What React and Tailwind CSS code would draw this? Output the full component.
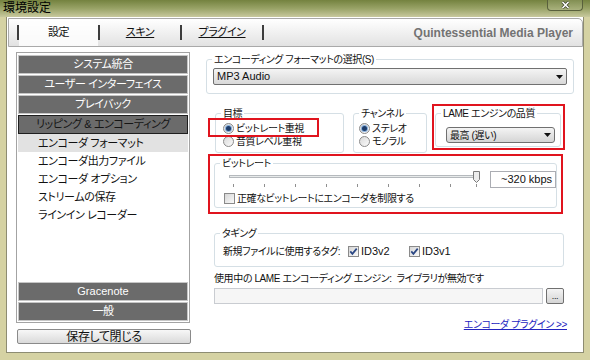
import React from "react";

const navBtn =
  "h-[19px] shrink-0 flex items-center justify-center bg-[#6b6b6b] border border-[#c6c6c6] text-white";

function Radio({ checked }) {
  return (
    <span className="w-[11px] h-[11px] shrink-0 rounded-full border border-[#8a8a8a] bg-gradient-to-br from-[#d9d9d9] to-[#fbfbfb] flex items-center justify-center">
      {checked && (
        <span className="w-[5px] h-[5px] rounded-full bg-[#1d3c6a] ring-1 ring-[#86aedb]" />
      )}
    </span>
  );
}

function Check({ checked }) {
  return (
    <span className="w-[11px] h-[11px] shrink-0 border border-[#8a8a8a] bg-gradient-to-br from-[#d6d6d6] to-[#fafafa] flex items-center justify-center">
      {checked && (
        <svg width="9" height="9" viewBox="0 0 9 9">
          <path d="M1.3 4.4 L3.4 6.9 L7.7 1.6" fill="none" stroke="#2b4784" strokeWidth="1.7" />
        </svg>
      )}
    </span>
  );
}

// group box; padding goes on the inner div so the legend stays put
function Group({ label, className, inner = "", children }) {
  return (
    <fieldset className={`border border-[#d5dfe5] rounded-[3px] shrink-0 ${className}`}>
      <legend className="ml-[5px] px-[2px] leading-[13px]">{label}</legend>
      <div className={inner}>{children}</div>
    </fieldset>
  );
}

function Arrow() {
  return (
    <svg width="7" height="4" viewBox="0 0 7 4">
      <path d="M0 0 H7 L3.5 4 Z" fill="#111" />
    </svg>
  );
}

function Slider() {
  const ticks = [4, 35, 66, 97, 128, 159, 190, 221, 247];
  return (
    <svg width="252" height="18" viewBox="0 0 252 18" className="shrink-0">
      <rect x="0.5" y="4.5" width="250" height="2" fill="#e7eaea" stroke="#b5b9bd" />
      {ticks.map((t) => (
        <line key={t} x1={t + 0.5} y1="13" x2={t + 0.5} y2="16" stroke="#8f8f8f" />
      ))}
      <path
        d="M244.5 0.5 H250.5 V8.5 L247.5 11.5 L244.5 8.5 Z"
        fill="#ececec"
        stroke="#7a7a7a"
      />
    </svg>
  );
}

export default function App() {
  return (
    <div className="w-[590px] h-[360px] overflow-hidden flex flex-col whitespace-nowrap bg-[#d5d2a3] font-['Liberation_Sans','Noto_Sans_CJK_JP',sans-serif] text-[10px] tracking-[-0.4px] text-[#111] [font-feature-settings:'palt']">
      {/* title bar */}
      <div className="h-[17px] shrink-0 flex justify-between bg-gradient-to-b from-[#74823f] via-[#99a367] to-[#c8c99e]">
        <span className="pl-[3px] text-[12px] leading-[17px] tracking-normal text-black">環境設定</span>
        <div className="mr-[7px] w-[36px] h-[11px] flex items-center justify-center border border-t-0 border-[#59603c] rounded-b-[4px] bg-white/10">
          <svg width="9" height="8" viewBox="0 0 9 8">
            <path d="M1.5 1 L7.5 7 M7.5 1 L1.5 7" stroke="#3c4128" strokeWidth="3" />
            <path d="M1.5 1 L7.5 7 M7.5 1 L1.5 7" stroke="#ffffff" strokeWidth="1.6" />
          </svg>
        </div>
      </div>

      <div className="flex-1 flex px-[6px] pb-[7px]">
        <div className="flex-1 flex flex-col bg-white border-x border-b border-[#8d8c72]">
          {/* tab bar */}
          <div className="mt-[1px] ml-[1px] h-[29px] shrink-0 flex items-center border border-[#a9a9a9] rounded-tr-[5px] bg-gradient-to-b from-white to-[#e2e2e2] pl-[8px] text-[11px]">
            <span className="w-[2px] h-[15px] bg-[#3d3d3d]" />
            <span className="w-[79px] h-full flex items-center justify-center bg-white/80">設定</span>
            <span className="w-[2px] h-[15px] bg-[#3d3d3d]" />
            <span className="w-[80px] flex items-center justify-center underline">スキン</span>
            <span className="w-[2px] h-[15px] bg-[#3d3d3d]" />
            <span className="w-[80px] flex items-center justify-center underline">プラグイン</span>
            <span className="w-[2px] h-[15px] bg-[#3d3d3d]" />
            <span className="ml-auto pr-[9px] font-bold text-[12px] tracking-normal text-[#737373]">
              Quintessential Media Player
            </span>
          </div>

          {/* body */}
          <div className="flex-1 flex">
            {/* left column */}
            <div className="pl-[9px] pt-[5px] flex flex-col text-[11px]">
              <div className="w-[174px] h-[271px] border border-[#a3a3a3] px-[1px] pt-[2px] pb-[1px] flex flex-col gap-[1px]">
                <div className={navBtn}>システム統合</div>
                <div className={navBtn}>ユーザー インターフェイス</div>
                <div className={navBtn}>プレイバック</div>
                <div className="h-[19px] shrink-0 flex items-center justify-center bg-[#6b6b6b] border border-[#1e1e1e] text-[#151515]">
                  リッピング &amp; エンコーディング
                </div>
                <div className="-mt-[1px] flex flex-col">
                  <div className="h-[18px] flex items-center pl-[20px] bg-[#e2e2e2]">エンコーダ フォーマット</div>
                  <div className="h-[18px] flex items-center pl-[20px]">エンコーダ出力ファイル</div>
                  <div className="h-[18px] flex items-center pl-[20px]">エンコーダ オプション</div>
                  <div className="h-[18px] flex items-center pl-[20px]">ストリームの保存</div>
                  <div className="h-[18px] flex items-center pl-[20px]">ラインイン レコーダー</div>
                </div>
                <div className="flex-1" />
                <div className={`${navBtn} tracking-normal`}>Gracenote</div>
                <div className={navBtn}>一般</div>
              </div>
              <div className="mt-[6px] ml-[1px] w-[174px] h-[15px] flex items-center justify-center border border-[#8a8a8a] rounded-[2px] bg-gradient-to-b from-[#f7f7f7] to-[#dadada] text-[12px]">
                保存して閉じる
              </div>
            </div>

            {/* right column */}
            <div className="ml-[15px] w-[368px] flex flex-col">
              <Group label="エンコーディング フォーマットの選択(S)" className="mt-[6px] w-[368px]" inner="px-[6px] pb-[8px]">
                <div className="mt-[2px] h-[17px] flex items-center justify-between px-[3px] border border-[#707070] rounded-[2px] bg-gradient-to-b from-[#f4f4f4] to-[#d9d9d9]">
                  <span className="text-[11px] tracking-normal">MP3 Audio</span>
                  <Arrow />
                </div>
              </Group>

              <div className="relative mt-[10px] h-[50px] flex items-start shrink-0">
                <Group label="目標" className="ml-[9px] mt-[3px] w-[129px] h-[46px]" inner="pl-[7px] pt-[2px] flex flex-col">
                  <div className="h-[13px] flex items-center gap-[2px]">
                    <Radio checked />
                    <span>ビットレート重視</span>
                  </div>
                  <div className="h-[13px] flex items-center gap-[2px]">
                    <Radio />
                    <span>音質レベル重視</span>
                  </div>
                </Group>
                <Group label="チャンネル" className="ml-[9px] mt-[3px] w-[74px] h-[46px]" inner="pl-[5px] pt-[2px] flex flex-col">
                  <div className="h-[13px] flex items-center gap-[2px]">
                    <Radio checked />
                    <span>ステレオ</span>
                  </div>
                  <div className="h-[13px] flex items-center gap-[2px]">
                    <Radio />
                    <span>モノラル</span>
                  </div>
                </Group>
                <div className="ml-[5px] w-[133px] h-[46px] border-2 border-[#e0141e] pl-[1px]">
                  <Group label="LAME エンジンの品質" className="mt-[1px] w-[126px]" inner="pl-[10px] pb-[3px]">
                    <div className="mt-[7px] w-[109px] h-[16px] flex items-center justify-between px-[3px] border border-[#707070] rounded-[3px] bg-gradient-to-b from-[#f4f4f4] to-[#d5d5d5]">
                      <span>最高 (遅い)</span>
                      <Arrow />
                    </div>
                  </Group>
                </div>
                {/* annotation box */}
                <div className="absolute left-[2px] top-[14px] w-[111px] h-[19px] border-2 border-[#e0141e]" />
              </div>

              <div className="ml-[2px] w-[355px] h-[60px] shrink-0 border-2 border-[#e0141e] pl-[4px]">
                <Group label="ビットレート" className="mt-[1px] w-[343px]" inner="pb-[2px]">
                  <div className="mt-[1px] flex items-start">
                    <div className="ml-[14px]">
                      <Slider />
                    </div>
                    <div className="ml-[9px] w-[66px] h-[17px] flex items-center pl-[10px] border border-[#abadb3] text-[11px] tracking-normal">
                      ~320 kbps
                    </div>
                  </div>
                  <div className="mt-[3px] ml-[9px] h-[13px] flex items-center gap-[2px]">
                    <Check />
                    <span>正確なビットレートにエンコーダを制限する</span>
                  </div>
                </Group>
              </div>

              <Group label="タギング" className="mt-[13px] ml-[8px] w-[350px]" inner="pl-[8px] pb-[8px]">
                <div className="mt-[5px] h-[13px] flex items-center">
                  <span className="w-[125px]">新規ファイルに使用するタグ:</span>
                  <span className="w-[61px] flex items-center gap-[2px]">
                    <Check checked />
                    <span className="text-[11px] tracking-normal">ID3v2</span>
                  </span>
                  <span className="flex items-center gap-[2px]">
                    <Check checked />
                    <span className="text-[11px] tracking-normal">ID3v1</span>
                  </span>
                </div>
              </Group>

              <div className="mt-[5px] ml-[8px] h-[13px] flex items-center">
                使用中の LAME エンコーディング エンジン:&nbsp;&nbsp;ライブラリが無効です
              </div>
              <div className="mt-[3px] ml-[8px] h-[16px] flex items-stretch">
                <div className="w-[329px] border border-[#c9ccd1] bg-[#f6f6f6]" />
                <div className="ml-[3px] w-[18px] flex items-center justify-center border border-[#707070] rounded-[2px] bg-gradient-to-b from-[#f4f4f4] to-[#d5d5d5] text-[9px] leading-none">
                  ...
                </div>
              </div>
              <div className="mt-[14px] mr-[7px] h-[13px] self-end flex items-center text-[#2424c0] underline">
                エンコーダ プラグイン &gt;&gt;
              </div>
            </div>
          </div>
        </div>
      </div>
    </div>
  );
}
